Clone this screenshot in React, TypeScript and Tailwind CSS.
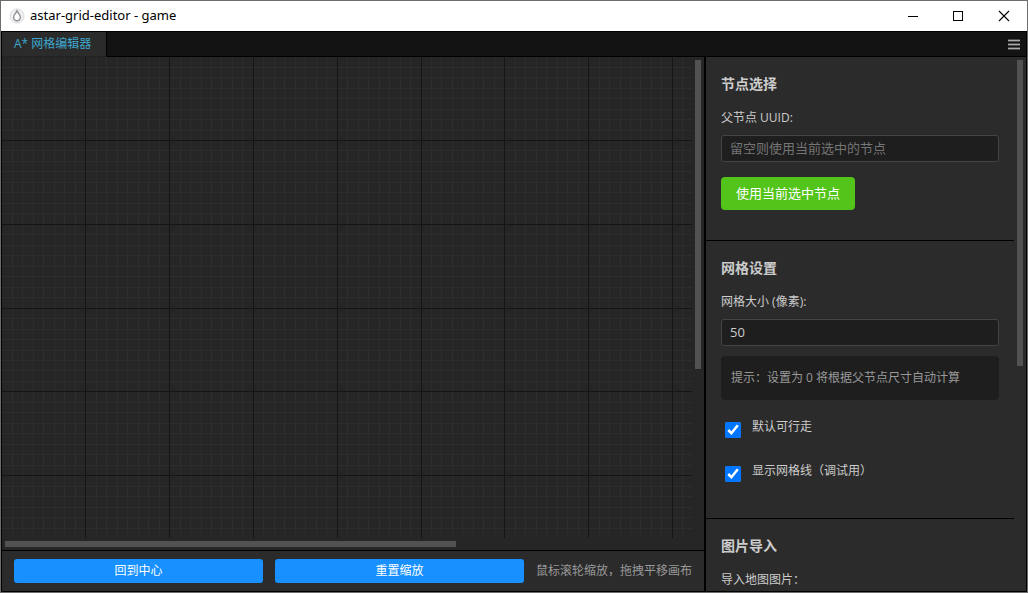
import { useState } from 'react';
import type { ReactNode } from 'react';

const CELL = 10.475;

// Linhas da grade: a cada 8 linhas finas vem uma grossa
function gridLines(size: number, offset: number) {
  const lines: { pos: number; major: boolean }[] = [];
  for (let i = 1; i * CELL < size; i++) {
    lines.push({ pos: Math.floor(i * CELL - offset), major: i % 8 === 0 });
  }
  return lines;
}

function GridCanvas() {
  const cols = gridLines(2400, 0);
  const rows = gridLines(1600, 0.3);

  return (
    <svg className="block h-full w-full" shapeRendering="crispEdges">
      {[false, true].map((major) => (
        <g key={String(major)} fill={major ? '#151515' : '#2d2d2d'}>
          {cols.filter((l) => l.major === major).map((l) => (
            <rect key={`c${l.pos}`} x={l.pos} y={0} width={1} height="100%" />
          ))}
          {rows.filter((l) => l.major === major).map((l) => (
            <rect key={`r${l.pos}`} x={0} y={l.pos} width="100%" height={1} />
          ))}
        </g>
      ))}
    </svg>
  );
}

function TitleBar() {
  return (
    <header className="flex h-[30px] shrink-0 items-center bg-white text-black">
      <svg className="ml-2 h-4 w-4" viewBox="0 0 16 16" fill="none">
        <circle cx="8" cy="8" r="7" fill="#f0f0f2" stroke="#dcdce0" />
        <path
          d="M8 2.9C7 5 4.6 6.8 4.6 9.3a3.4 3.4 0 0 0 6.8 0C11.4 6.8 9 5 8 2.9Z"
          fill="#fff"
          stroke="#94949a"
          strokeWidth="1.5"
        />
      </svg>
      <h1 className="ml-[5px] flex-1 font-['Noto_Sans',sans-serif] text-[13px]">astar-grid-editor - game</h1>
      <button aria-label="最小化" className="flex h-full w-[46px] items-center justify-center">
        <svg className="h-3 w-3" viewBox="0 0 12 12" shapeRendering="crispEdges">
          <rect x="2" y="6" width="10" height="1" fill="#000" />
        </svg>
      </button>
      <button aria-label="最大化" className="flex h-full w-[46px] items-center justify-center">
        <svg className="h-3 w-3" viewBox="0 0 12 12" fill="none">
          <rect x="1.5" y="1.5" width="9" height="9" stroke="#000" />
        </svg>
      </button>
      <button aria-label="关闭" className="flex h-full w-[46px] items-center justify-center">
        <svg className="h-3 w-3" viewBox="0 0 12 12" fill="none">
          <path d="M1 1l10 10M11 1L1 11" stroke="#000" strokeWidth="1.1" />
        </svg>
      </button>
    </header>
  );
}

function Section({ title, children }: { title: string; children: ReactNode }) {
  return (
    <section className="border-b border-black p-[15px]">
      <h2 className="mb-2.5 text-sm leading-6 font-bold">{title}</h2>
      {children}
    </section>
  );
}

function CheckRow({ id, text }: { id: string; text: string }) {
  const [checked, setChecked] = useState(true);
  return (
    <div className="mb-5 flex h-6 pl-1">
      <input
        id={id}
        type="checkbox"
        checked={checked}
        onChange={(e) => setChecked(e.target.checked)}
        className="mt-[7px] h-4 w-4 shrink-0"
      />
      <label htmlFor={id} className="ml-[11px] text-xs leading-6">{text}</label>
    </div>
  );
}

const inputClass =
  'block h-[27px] w-full rounded-[3px] border border-[#444] bg-[#1e1e1e] px-2 pb-0.5 text-[13px] placeholder:text-[#757575] outline-none';

export default function App() {
  const [uuid, setUuid] = useState('');
  const [gridSize, setGridSize] = useState('50');

  return (
    <div className="flex h-screen flex-col border border-[#6d6d6d] bg-black font-['Open_Sans','Noto_Sans_CJK_SC',sans-serif] text-[#ccc]">
      <TitleBar />

      <div className="flex min-h-0 flex-1 flex-col border border-black">
        {/* Abas */}
        <nav className="flex h-[25px] shrink-0 justify-between border-b border-black bg-[#131313]">
          <button className="-mb-px border-r border-b border-r-black border-b-[#222] bg-[#2b2b2b] pr-[15px] pl-3 text-xs leading-6 text-[#3ea6cc]">
            A* 网格编辑器
          </button>
          <button aria-label="菜单" className="mr-1.5 flex items-center pt-px">
            <svg className="h-3 w-3" viewBox="0 0 12 12" shapeRendering="crispEdges">
              <path d="M0 0h12v3H0zM0 4h12v3H0zM0 8h12v3H0z" fill="#4a4a4a" />
              <path d="M0 1h12v1H0zM0 5h12v1H0zM0 9h12v1H0z" fill="#aaa" />
            </svg>
          </button>
        </nav>

        <main className="flex min-h-0 flex-1">
          {/* Área da grade */}
          <div className="flex min-w-0 flex-1 flex-col border-r-2 border-black">
            <div className="grid min-h-0 flex-1 grid-cols-[1fr_12px] grid-rows-[1fr_12px] bg-[#262626]">
              <div className="min-h-0 min-w-0 overflow-hidden">
                <GridCanvas />
              </div>
              <div className="p-[3px]">
                <div className="h-[65%] bg-[#525252]" />
              </div>
              <div className="p-[3px]">
                <div className="h-full w-[66%] bg-[#525252]" />
              </div>
            </div>

            <div className="flex items-center gap-3 border-t border-black bg-[#2b2b2b] px-3 py-2 text-xs">
              <button className="h-6 flex-1 rounded-[3px] bg-[#1890ff] text-white">回到中心</button>
              <button className="h-6 flex-1 rounded-[3px] bg-[#1890ff] text-white">重置缩放</button>
              <span className="text-[#999]">鼠标滚轮缩放，拖拽平移画布</span>
            </div>
          </div>

          {/* Painel lateral */}
          <aside className="flex w-80 shrink-0 bg-[#2b2b2b]">
            <div className="min-w-0 flex-1 overflow-hidden">
              <Section title="节点选择">
                <label htmlFor="uuid" className="block text-xs leading-6">父节点 UUID:</label>
                <input
                  id="uuid"
                  type="text"
                  placeholder="留空则使用当前选中的节点"
                  value={uuid}
                  onChange={(e) => setUuid(e.target.value)}
                  className={`mt-[5px] ${inputClass}`}
                />
                <button className="my-[15px] block h-[33px] rounded bg-[#52c41a] px-[15px] text-[13px] text-white">
                  使用当前选中节点
                </button>
              </Section>

              <Section title="网格设置">
                <label htmlFor="size" className="block text-xs leading-6">网格大小 (像素):</label>
                <input
                  id="size"
                  type="text"
                  inputMode="numeric"
                  value={gridSize}
                  onChange={(e) => setGridSize(e.target.value)}
                  className={`mt-[5px] ${inputClass}`}
                />
                <p className="mt-2.5 mb-[15px] rounded bg-[#1e1e1e] p-2.5 text-xs leading-6 text-[#999]">
                  提示：设置为 0 将根据父节点尺寸自动计算
                </p>
                <CheckRow id="walkable" text="默认可行走" />
                <CheckRow id="lines" text="显示网格线（调试用）" />
              </Section>

              <Section title="图片导入">
                <p className="text-xs leading-6">导入地图图片：</p>
              </Section>
            </div>
            <div className="w-3 p-[3px]">
              <div className="h-[58%] bg-[#525252]" />
            </div>
          </aside>
        </main>
      </div>
    </div>
  );
}
